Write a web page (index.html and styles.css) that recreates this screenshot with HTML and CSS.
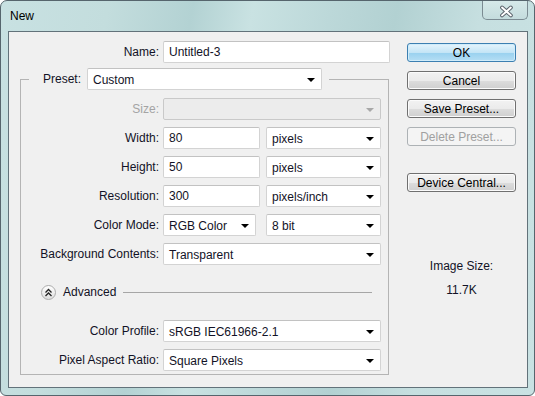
FILE: index.html
```html
<!DOCTYPE html>
<html lang="en">
<head>
    <meta charset="UTF-8">
    <title>New</title>
    <link rel="stylesheet" href="styles.css">
</head>
<body>
    <div class="window">
        <div class="titlebar">
            <span class="title">New</span>
            <div class="close">
                <svg width="46" height="20" viewBox="0 0 46 20">
                    <path d="M20.5 7.5 L29.5 15.5 M29.5 7.5 L20.5 15.5" stroke="#5c646c" stroke-width="4" stroke-linecap="round"/>
                    <path d="M20.5 7.5 L29.5 15.5 M29.5 7.5 L20.5 15.5" stroke="#ffffff" stroke-width="2" stroke-linecap="round"/>
                </svg>
            </div>
        </div>

        <div class="client">
            <div class="main">
                <div class="row name-row">
                    <label class="label name-label">Name:</label>
                    <div class="field w-name">Untitled-3</div>
                </div>

                <fieldset class="preset-group">
                    <legend class="preset-legend">
                        <span class="label-inline">Preset:</span>
                        <div class="select w-preset">Custom<span class="arrow"></span></div>
                    </legend>

                    <div class="rows">
                        <div class="row">
                            <label class="label disabled-text">Size:</label>
                            <div class="select disabled w-full"><span class="arrow"></span></div>
                        </div>
                        <div class="row">
                            <label class="label">Width:</label>
                            <div class="field w-num">80</div>
                            <div class="select w-unit">pixels<span class="arrow"></span></div>
                        </div>
                        <div class="row">
                            <label class="label">Height:</label>
                            <div class="field w-num">50</div>
                            <div class="select w-unit">pixels<span class="arrow"></span></div>
                        </div>
                        <div class="row">
                            <label class="label">Resolution:</label>
                            <div class="field w-num">300</div>
                            <div class="select w-unit">pixels/inch<span class="arrow"></span></div>
                        </div>
                        <div class="row">
                            <label class="label">Color Mode:</label>
                            <div class="select w-mode">RGB Color<span class="arrow"></span></div>
                            <div class="select w-bit">8 bit<span class="arrow"></span></div>
                        </div>
                        <div class="row">
                            <label class="label">Background Contents:</label>
                            <div class="select w-full">Transparent<span class="arrow"></span></div>
                        </div>

                        <div class="advanced">
                            <span class="adv-toggle">
                                <svg width="9" height="9" viewBox="0 0 9 9">
                                    <path d="M1.5 4.5 L4.5 1.5 L7.5 4.5 M1.5 8 L4.5 5 L7.5 8" stroke="#222" stroke-width="1.3" fill="none"/>
                                </svg>
                            </span>
                            <span class="adv-text">Advanced</span>
                            <span class="adv-line"></span>
                        </div>

                        <div class="row">
                            <label class="label">Color Profile:</label>
                            <div class="select w-full">sRGB IEC61966-2.1<span class="arrow"></span></div>
                        </div>
                        <div class="row">
                            <label class="label">Pixel Aspect Ratio:</label>
                            <div class="select w-full">Square Pixels<span class="arrow"></span></div>
                        </div>
                    </div>
                </fieldset>
            </div>

            <div class="side">
                <button class="btn btn-default">OK</button>
                <button class="btn">Cancel</button>
                <button class="btn">Save Preset...</button>
                <button class="btn" disabled>Delete Preset...</button>
                <button class="btn btn-device">Device Central...</button>

                <div class="image-size">
                    <div>Image Size:</div>
                    <div class="image-size-value">11.7K</div>
                </div>
            </div>
        </div>
    </div>
</body>
</html>
```

FILE: styles.css
```css
body {
    margin: 0;
    background: #ffffff;
    font-family: "Liberation Sans", Arial, sans-serif;
    font-size: 12px;
    color: #121226;
}
.window {
    width: 535px;
    height: 396px;
    box-sizing: border-box;
    border: 1px solid #56656d;
    border-radius: 7px 7px 6px 6px;
    background: linear-gradient(100deg, #c8e1e2 0%, #c3dddd 18%, #b3d2d3 32%, #c9e2e2 42%, #bcd8d9 55%, #b2d1d2 66%, #c6dfe0 80%, #c9e2e3 100%);
    display: flex;
    flex-direction: column;
    overflow: hidden;
}
.titlebar {
    height: 30px;
    display: flex;
    justify-content: space-between;
    align-items: flex-start;
    padding-left: 9px;
}
.title {
    margin-top: 8px;
    color: #000;
}
.close {
    width: 46px;
    height: 20px;
    margin-right: 6px;
    margin-top: -1px;
    box-sizing: border-box;
    border: 1px solid #7b8b92;
    border-top: none;
    border-radius: 0 0 5px 5px;
    background: linear-gradient(#d7eaea, #c4dcdd);
    display: flex;
    align-items: center;
    justify-content: center;
}
.close svg {
    display: block;
    margin-left: -1px;
}
.client {
    flex: 1;
    margin: 0 6px 7px 7px;
    border: 1px solid #62727a;
    background: #f0f0f0;
    display: flex;
}
.main {
    width: 386px;
}
.row {
    display: flex;
    align-items: center;
    height: 22px;
}
.label {
    width: 138px;
    margin-right: 4px;
    text-align: right;
    white-space: nowrap;
}
.name-row {
    margin-top: 9px;
}
.name-label {
    width: 150px;
}
.disabled-text {
    color: #a4a4a4;
}
.field, .select {
    height: 22px;
    box-sizing: border-box;
    background: #ffffff;
    border: 1px solid #d3d3d3;
    border-top-color: #c2c2c2;
    border-radius: 2px;
    padding-left: 5px;
    display: flex;
    align-items: center;
    white-space: nowrap;
    position: relative;
}
.select {
    padding-top: 1px;
}
.select.disabled {
    background: #ececec;
    border-color: #c9c9c9;
}
.arrow {
    position: absolute;
    right: 6px;
    top: 9px;
    width: 0;
    height: 0;
    border-left: 4px solid transparent;
    border-right: 4px solid transparent;
    border-top: 4px solid #000;
}
.disabled .arrow {
    border-top-color: #a8a8a8;
}
.w-name { width: 227px; }
.w-full { width: 218px; }
.w-num { width: 97px; margin-right: 6px; }
.w-unit { width: 115px; }
.w-mode { width: 93px; margin-right: 10px; }
.w-bit { width: 115px; }
.w-preset { width: 235px; }

.preset-group {
    margin: 5px 0 0 11px;
    width: 369px;
    min-width: 0;
    box-sizing: border-box;
    padding: 0 0 3px 0;
    border: 1px solid #b4b4b4;
}
.preset-legend {
    margin-left: 8px;
    padding: 0 7px 0 14px;
    display: flex;
    align-items: center;
    height: 22px;
}
.label-inline {
    margin-right: 6px;
}
.rows {
    padding-top: 8px;
    display: flex;
    flex-direction: column;
    gap: 7px;
}
.advanced {
    display: flex;
    align-items: center;
    height: 16px;
    margin: 12px 0 13px 20px;
}
.adv-toggle {
    width: 15px;
    height: 15px;
    box-sizing: border-box;
    border: 1px solid #acacac;
    border-radius: 50%;
    background: linear-gradient(#ffffff, #dedede);
    display: flex;
    align-items: center;
    justify-content: center;
}
.adv-text {
    margin-left: 7px;
}
.adv-line {
    flex: 1;
    height: 1px;
    background: #a6a6a6;
    margin: 0 16px 0 7px;
}

.side {
    width: 109px;
    padding: 11px 0 0 12px;
    display: flex;
    flex-direction: column;
}
.btn {
    height: 19px;
    margin-bottom: 9px;
    padding: 0;
    font-family: inherit;
    font-size: 12px;
    color: #000;
    border: 1px solid #707070;
    border-radius: 3px;
    background: linear-gradient(#f2f2f2 0%, #ebebeb 50%, #dddddd 51%, #cfcfcf 100%);
    box-shadow: inset 0 0 0 1px #fbfbfb;
}
.btn-default {
    border-color: #3c7fb1;
    background: linear-gradient(#e5f4fc 0%, #c4e5f6 50%, #98d1ef 51%, #b5def4 100%);
    box-shadow: inset 0 0 0 1px #d0ecfa;
}
.btn:disabled {
    color: #a0a0a0;
    border-color: #adb2b5;
    background: #f4f4f4;
    box-shadow: none;
}
.btn-device {
    margin-top: 18px;
}
.image-size {
    margin-top: 58px;
    text-align: center;
    line-height: 14px;
}
.image-size-value {
    margin-top: 10px;
}
```
